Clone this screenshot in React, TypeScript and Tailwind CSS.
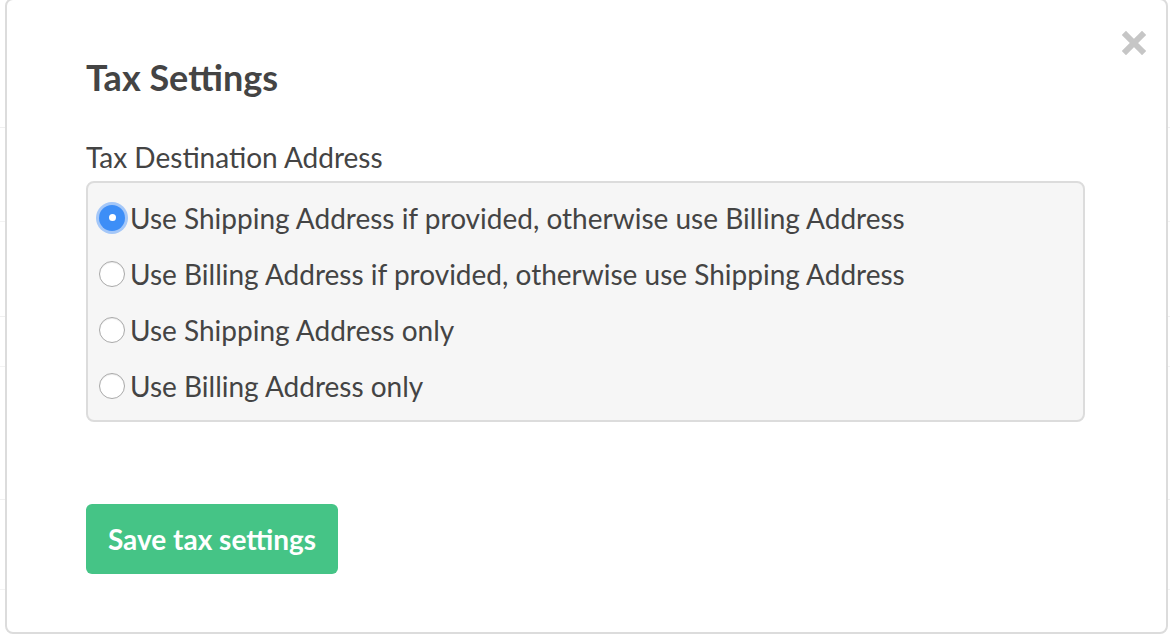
import React, { useState } from "react";

const options = [
  "Use Shipping Address if provided, otherwise use Billing Address",
  "Use Billing Address if provided, otherwise use Shipping Address",
  "Use Shipping Address only",
  "Use Billing Address only",
];

const Radio: React.FC<{ checked: boolean }> = ({ checked }) =>
  checked ? (
    <span className="flex h-[26px] w-[26px] shrink-0 items-center justify-center rounded-full bg-[#3d8ef7] shadow-[0_0_0_3px_rgba(96,160,250,0.55)]">
      <span className="h-[7px] w-[7px] rounded-full bg-white" />
    </span>
  ) : (
    <span className="h-[26px] w-[26px] shrink-0 rounded-full border border-[#a9a9a9] bg-white shadow-[inset_0_1px_1px_rgba(0,0,0,0.08)]" />
  );

export default function App() {
  const [selected, setSelected] = useState(0);

  return (
    <div
      className="relative h-[634px] w-[1170px] overflow-hidden bg-white text-[#444]"
      style={{ fontFamily: "Lato, 'Open Sans', sans-serif" }}
    >
      {/* faint page behind the modal */}
      <div className="flex flex-col">
        <div className="h-[128px] border-b border-[#f0f0f0]" />
        <div className="h-[94px] border-b border-[#f3f3f3]" />
        <div className="h-[95px] border-b border-[#f0f0f0]" />
        <div className="h-[50px] border-b border-[#f3f3f3]" />
        <div className="h-[133px] border-b border-[#f0f0f0]" />
        <div className="h-[90px] border-b border-[#f3f3f3]" />
      </div>

      {/* modal */}
      <div className="absolute left-[5px] top-[-2px] h-[636px] w-[1163px] rounded-lg border-2 border-[#dcdcdc] bg-white">
        <button className="absolute right-[20px] top-[31px] text-[#c6c6c6]">
          <svg width="24" height="24" viewBox="0 0 24 24">
            <path
              d="M4 4 L20 20 M20 4 L4 20"
              stroke="currentColor"
              strokeWidth="6"
              strokeLinecap="square"
            />
          </svg>
        </button>

        <div className="pl-[79px] pt-[56px]">
          <h2 className="text-[36px] font-bold leading-[1.2] text-[#444]">Tax Settings</h2>

          <div className="mt-[42px] text-[28px] leading-[1.2]">Tax Destination Address</div>

          <div className="mt-[6px] w-[999px] rounded-lg border-2 border-[#dcdcdc] bg-[#f6f6f6] pb-[6px] pl-[11px] pt-[7px]">
            {options.map((opt, i) => (
              <label
                key={opt}
                onClick={() => setSelected(i)}
                className="flex h-[56px] cursor-pointer items-center gap-[5px] text-[28px] text-[#444]"
              >
                <Radio checked={selected === i} />
                <span>{opt}</span>
              </label>
            ))}
          </div>

          <button className="mt-[82px] flex h-[70px] w-[252px] items-center justify-center rounded-md bg-[#45c486] text-[28px] font-bold text-white">
            Save tax settings
          </button>
        </div>
      </div>
    </div>
  );
}
